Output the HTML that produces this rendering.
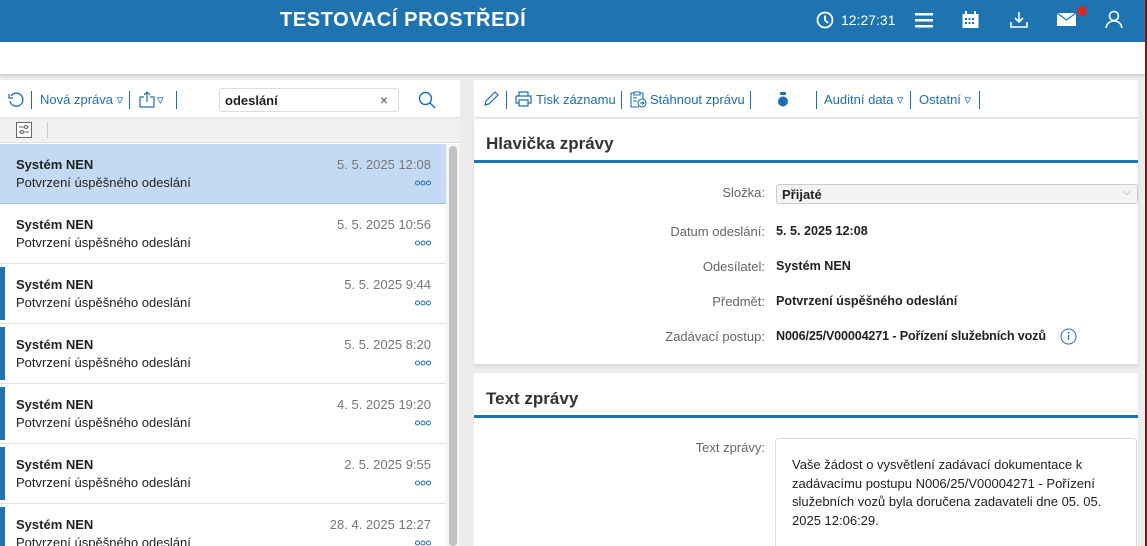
<!DOCTYPE html>
<html style="overflow:hidden;height:546px"><head><meta charset="utf-8"><style>
*{box-sizing:border-box;margin:0;padding:0}
body{width:1147px;height:546px;overflow:hidden;background:#ececec;font-family:"Liberation Sans",Arial,sans-serif;font-size:13px;color:#222;position:relative}
.abs{position:absolute}
.hdr{left:0;top:0;width:1147px;height:42px;background:#1e74b1}
.title{left:280px;top:9px;color:#fff;font-weight:bold;font-size:20px;letter-spacing:.6px}
.wbar{left:0;top:42px;width:1145px;height:32px;background:#fff;box-shadow:0 2px 3px rgba(0,0,0,.12)}
.redline{left:1145px;top:0;width:2px;height:546px;background:#6b1c1c}
.left{left:0;top:80px;width:460px;height:466px;background:#fff}
.tb{height:38px;border-bottom:1px solid #e0e0e0}
.blue{color:#1e6fb0}
.sep{display:inline-block;width:1px;height:18px;background:#1e6fb0;vertical-align:middle}
.item{position:absolute;left:0;width:446px;height:60px;border-bottom:1px solid #e3e3e3;background:#fff}
.item .bar{position:absolute;left:0;top:3px;width:5px;height:53px;background:#1e74b1}
.item .s{position:absolute;left:16px;top:13px;font-weight:bold;font-size:13px}
.item .p{position:absolute;left:16px;top:31px;font-size:13px}
.item .d{position:absolute;right:15px;top:13px;color:#777;font-size:13px}
.item .m{position:absolute;right:15px;top:36px;width:16px;height:6px}
.right{left:474px;top:80px;width:664px;height:38px;background:#fff;border-bottom:1px solid #e0e0e0}
.card{background:#fff;left:474px;width:664px;overflow:hidden}
.ct{position:absolute;left:12px;font-weight:bold;font-size:17px;color:#333}
.cl{position:absolute;left:0;width:664px;height:3px;background:#1e74b1}
.lab{position:absolute;right:373px;color:#666;font-size:13px;text-align:right;white-space:nowrap}
.val{position:absolute;left:302px;font-weight:bold;font-size:12.6px;white-space:nowrap}
</style></head><body>
<div class="abs hdr"></div>
<div class="abs title">TESTOVACÍ PROSTŘEDÍ</div>
<svg class="abs" style="left:816px;top:11px" width="18" height="18" viewBox="0 0 18 18"><circle cx="9" cy="9" r="7.5" fill="none" stroke="#fff" stroke-width="1.8"/><path d="M9 4.5V9l3 3" fill="none" stroke="#fff" stroke-width="1.8"/></svg>
<div class="abs" style="left:841px;top:12px;color:#fff;font-size:14px">12:27:31</div>
<svg class="abs" style="left:915px;top:13px" width="18" height="15"><rect y="0" width="18" height="2.5" fill="#fff"/><rect y="6" width="18" height="2.5" fill="#fff"/><rect y="12" width="18" height="2.5" fill="#fff"/></svg>
<svg class="abs" style="left:962px;top:11px" width="17" height="18" viewBox="0 0 17 18"><rect x="0.5" y="3" width="16" height="14" fill="#fff"/><rect x="3" y="0" width="2" height="4" fill="#fff"/><rect x="12" y="0" width="2" height="4" fill="#fff"/><g fill="#1e74b1"><rect x="3" y="7" width="2" height="2"/><rect x="6.5" y="7" width="2" height="2"/><rect x="10" y="7" width="2" height="2"/><rect x="3" y="11" width="2" height="2"/><rect x="6.5" y="11" width="2" height="2"/><rect x="10" y="11" width="2" height="2"/></g></svg>
<svg class="abs" style="left:1010px;top:11px" width="18" height="18" viewBox="0 0 18 18"><path d="M9 1v10M5 7l4 4 4-4M1 11v5h16v-5" fill="none" stroke="#fff" stroke-width="1.6"/></svg>
<svg class="abs" style="left:1057px;top:13px" width="20" height="14"><rect width="19" height="13" fill="#fff"/><path d="M0 0l9.5 7L19 0" fill="none" stroke="#1e74b1" stroke-width="1.2"/></svg>
<div class="abs" style="left:1077px;top:6px;width:10px;height:10px;border-radius:50%;background:#d02a2a"></div>
<svg class="abs" style="left:1105px;top:10px" width="18" height="19" viewBox="0 0 18 19"><circle cx="9" cy="6" r="4.5" fill="none" stroke="#fff" stroke-width="1.6"/><path d="M1 18c1-5 4-7 8-7s7 2 8 7" fill="none" stroke="#fff" stroke-width="1.6"/></svg>
<div class="abs wbar"></div>
<div class="abs redline"></div>

<div class="abs left">
 <div class="tb" style="position:relative">
  <svg class="abs" style="left:8px;top:12px" width="16" height="16" viewBox="0 0 16 16"><path d="M3 4A6.5 6.5 0 1 1 2 9" fill="none" stroke="#1e6fb0" stroke-width="1.3"/><path d="M1 2v4h4" fill="none" stroke="#1e6fb0" stroke-width="1.3"/></svg>
  <span class="sep abs" style="left:31px;top:11px"></span>
  <span class="abs blue" style="left:40px;top:12px">Nová zpráva ▿</span>
  <span class="sep abs" style="left:129px;top:11px"></span>
  <svg class="abs" style="left:139px;top:11px" width="16" height="17" viewBox="0 0 16 17"><path d="M5 6H1v10h14V6h-4M8 11V1M5 4l3-3 3 3" fill="none" stroke="#1e6fb0" stroke-width="1.2"/></svg>
  <span class="abs blue" style="left:157px;top:12px">▿</span>
  <span class="sep abs" style="left:176px;top:11px"></span>
  <div class="abs" style="left:219px;top:8px;width:180px;height:24px;border:1px solid #ddd;border-radius:3px;background:#fff"><span style="position:absolute;left:5px;top:4px;font-weight:bold;font-size:13px">odeslání</span><span style="position:absolute;right:10px;top:3px;color:#555;font-size:14px">×</span></div>
  <svg class="abs" style="left:418px;top:11px" width="18" height="18" viewBox="0 0 18 18"><circle cx="7.5" cy="7.5" r="6" fill="none" stroke="#1e6fb0" stroke-width="1.4"/><path d="M12 12l5 5" stroke="#1e6fb0" stroke-width="1.4"/></svg>
 </div>
 <div style="height:25px;background:#f1f1f1;position:relative;border-bottom:1px solid #ddd">
  <svg class="abs" style="left:16px;top:4px" width="16" height="16" viewBox="0 0 16 16"><rect x=".5" y=".5" width="15" height="15" fill="#fff" stroke="#666"/><path d="M3 5h10M3 10h10" stroke="#666"/><circle cx="10" cy="5" r="1.5" fill="#fff" stroke="#666"/><circle cx="6" cy="10" r="1.5" fill="#fff" stroke="#666"/></svg>
  <div class="abs" style="left:47px;top:4px;width:1px;height:16px;background:#ccc"></div>
 </div>
</div>
<div class="abs" style="left:0;top:144px;width:460px;height:402px;overflow:hidden">
 <div class="item" style="top:0;background:#c4daf3;border-bottom:1px solid #9fc2e7"><div class="s">Systém NEN</div><div class="p">Potvrzení úspěšného odeslání</div><div class="d">5. 5. 2025 12:08</div><svg class="m" viewBox="0 0 16 6"><g fill="none" stroke="#1e6fb0"><circle cx="2.5" cy="3" r="2"/><circle cx="8" cy="3" r="2"/><circle cx="13.5" cy="3" r="2"/></g></svg></div>
 <div class="item" style="top:60px"><div class="s">Systém NEN</div><div class="p">Potvrzení úspěšného odeslání</div><div class="d">5. 5. 2025 10:56</div><svg class="m" viewBox="0 0 16 6"><g fill="none" stroke="#1e6fb0"><circle cx="2.5" cy="3" r="2"/><circle cx="8" cy="3" r="2"/><circle cx="13.5" cy="3" r="2"/></g></svg></div>
 <div class="item" style="top:120px"><div class="bar"></div><div class="s">Systém NEN</div><div class="p">Potvrzení úspěšného odeslání</div><div class="d">5. 5. 2025 9:44</div><svg class="m" viewBox="0 0 16 6"><g fill="none" stroke="#1e6fb0"><circle cx="2.5" cy="3" r="2"/><circle cx="8" cy="3" r="2"/><circle cx="13.5" cy="3" r="2"/></g></svg></div>
 <div class="item" style="top:180px"><div class="bar"></div><div class="s">Systém NEN</div><div class="p">Potvrzení úspěšného odeslání</div><div class="d">5. 5. 2025 8:20</div><svg class="m" viewBox="0 0 16 6"><g fill="none" stroke="#1e6fb0"><circle cx="2.5" cy="3" r="2"/><circle cx="8" cy="3" r="2"/><circle cx="13.5" cy="3" r="2"/></g></svg></div>
 <div class="item" style="top:240px"><div class="bar"></div><div class="s">Systém NEN</div><div class="p">Potvrzení úspěšného odeslání</div><div class="d">4. 5. 2025 19:20</div><svg class="m" viewBox="0 0 16 6"><g fill="none" stroke="#1e6fb0"><circle cx="2.5" cy="3" r="2"/><circle cx="8" cy="3" r="2"/><circle cx="13.5" cy="3" r="2"/></g></svg></div>
 <div class="item" style="top:300px"><div class="bar"></div><div class="s">Systém NEN</div><div class="p">Potvrzení úspěšného odeslání</div><div class="d">2. 5. 2025 9:55</div><svg class="m" viewBox="0 0 16 6"><g fill="none" stroke="#1e6fb0"><circle cx="2.5" cy="3" r="2"/><circle cx="8" cy="3" r="2"/><circle cx="13.5" cy="3" r="2"/></g></svg></div>
 <div class="item" style="top:360px"><div class="bar"></div><div class="s">Systém NEN</div><div class="p">Potvrzení úspěšného odeslání</div><div class="d">28. 4. 2025 12:27</div><svg class="m" viewBox="0 0 16 6"><g fill="none" stroke="#1e6fb0"><circle cx="2.5" cy="3" r="2"/><circle cx="8" cy="3" r="2"/><circle cx="13.5" cy="3" r="2"/></g></svg></div>
 <div class="abs" style="left:446px;top:0;width:14px;height:402px;background:#f4f4f4"></div>
 <div class="abs" style="left:449px;top:2px;width:8px;height:400px;background:#c1c1c1;border-radius:4px"></div>
</div>

<div class="abs right">
 <svg class="abs" style="left:9px;top:11px" width="16" height="16" viewBox="0 0 16 16"><path d="M2 14l1-4 9-9 3 3-9 9z" fill="none" stroke="#1e6fb0" stroke-width="1.2"/></svg>
 <span class="sep abs" style="left:32px;top:11px"></span>
 <svg class="abs" style="left:41px;top:11px" width="17" height="16" viewBox="0 0 17 16"><path d="M4 5V1h9v4M1 5h15v7h-3M4 12H1V5M4 9h9v6H4z" fill="none" stroke="#1e6fb0" stroke-width="1.2"/></svg>
 <span class="abs blue" style="left:62px;top:12px">Tisk záznamu</span>
 <span class="sep abs" style="left:147px;top:11px"></span>
 <svg class="abs" style="left:155px;top:10px" width="18" height="18" viewBox="0 0 18 18"><path d="M5 3H2v14h8M11 3h3v6M5 2h6v3H5z" fill="none" stroke="#1e6fb0" stroke-width="1.1"/><circle cx="13" cy="13" r="4" fill="none" stroke="#1e6fb0" stroke-width="1.1"/><path d="M11 13h4M13.5 11.5L15 13l-1.5 1.5M4 8h4M4 11h4" stroke="#1e6fb0" fill="none"/></svg>
 <span class="abs blue" style="left:176px;top:12px">Stáhnout zprávu</span>
 <span class="sep abs" style="left:276px;top:11px"></span>
 <svg class="abs" style="left:304px;top:12px" width="10" height="15" viewBox="0 0 10 15"><rect x="2" y="0" width="6" height="3" rx="1" fill="#1e6fb0"/><circle cx="5" cy="9.5" r="5" fill="#1e6fb0"/></svg>
 <span class="sep abs" style="left:342px;top:11px"></span>
 <span class="abs blue" style="left:350px;top:12px">Auditní data ▿</span>
 <span class="sep abs" style="left:436px;top:11px"></span>
 <span class="abs blue" style="left:445px;top:12px">Ostatní ▿</span>
 <span class="sep abs" style="left:505px;top:11px"></span>
</div>

<div class="abs card" style="top:119px;height:245px;box-shadow:0 2px 3px rgba(0,0,0,.1)">
 <div class="ct" style="top:15px">Hlavička zprávy</div>
 <div class="cl" style="top:41px"></div>
 <div class="lab" style="top:66px">Složka:</div>
 <div class="abs" style="left:302px;top:65px;width:362px;height:20px;border:1px solid #ccc;border-radius:3px;background:#f4f4f4"><span style="position:absolute;left:5px;top:2px;font-weight:bold;font-size:13px">Přijaté</span><span style="position:absolute;right:6px;top:1px;color:#999;font-size:11px">⌵</span></div>
 <div class="lab" style="top:105px">Datum odeslání:</div><div class="val" style="top:105px">5. 5. 2025 12:08</div>
 <div class="lab" style="top:140px">Odesílatel:</div><div class="val" style="top:140px">Systém NEN</div>
 <div class="lab" style="top:175px">Předmět:</div><div class="val" style="top:175px">Potvrzení úspěšného odeslání</div>
 <div class="lab" style="top:210px">Zadávací postup:</div><div class="val" style="top:210px;letter-spacing:-0.15px">N006/25/V00004271 - Pořízení služebních vozů</div>
 <svg class="abs" style="left:586px;top:209px" width="17" height="17" viewBox="0 0 17 17"><circle cx="8.5" cy="8.5" r="7.5" fill="none" stroke="#1e6fb0"/><path d="M8.5 7v5" stroke="#1e6fb0" stroke-width="1.2"/><circle cx="8.5" cy="4.8" r=".9" fill="#1e6fb0"/></svg>
</div>

<div class="abs card" style="top:373px;height:173px">
 <div class="ct" style="top:16px">Text zprávy</div>
 <div class="cl" style="top:42px"></div>
 <div class="lab" style="top:67px">Text zprávy:</div>
 <div class="abs" style="left:301px;top:65px;width:362px;height:120px;border:1px solid #ddd;border-radius:4px;background:#fff;padding:17px 16px;font-size:13px;line-height:18.5px">Vaše žádost o vysvětlení zadávací dokumentace k zadávacímu postupu N006/25/V00004271 - Pořízení služebních vozů byla doručena zadavateli dne 05. 05. 2025 12:06:29.</div>
</div>
</body></html>
